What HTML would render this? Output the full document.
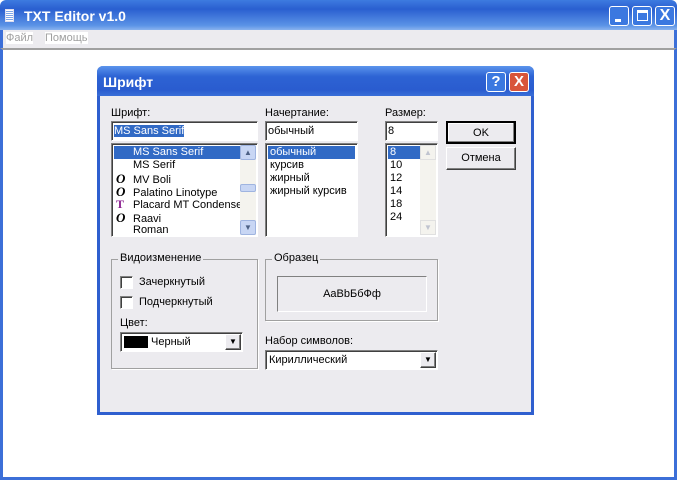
<!DOCTYPE html><html><head><meta charset="utf-8"><style>
*{margin:0;padding:0;box-sizing:border-box}
body{width:677px;height:480px;overflow:hidden;background:#fff;font-family:"Liberation Sans",sans-serif;font-size:11px;position:relative}
.a{position:absolute}
.sunk{border:1px solid;border-color:#808080 #fff #fff #808080;box-shadow:inset 1px 1px 0 #404040;background:#fff}
.btn{background:#ecebef;border:1px solid;border-color:#fff #404040 #404040 #fff;box-shadow:inset -1px -1px 0 #808080;text-align:center}
.grp{border:1px solid #a0a0a0;box-shadow:1px 1px 0 #fff}
.lbl{background:#ecebef;padding:0 2px}
.li{height:13px;line-height:13px;white-space:nowrap;padding-left:2px}
.sel{background:#316ac5;color:#fff}
.cb{width:13px;height:13px}
.xb{border:1px solid #fff;border-radius:3px}
</style></head><body>
<div class="a" style="left:0;top:0;width:677px;height:30px;background:linear-gradient(#3d7be0,#2a5fd0 30%,#5b93e6 85%,#89b3ee);border-radius:6px 6px 0 0"></div>
<div class="a" style="left:5px;top:9px;width:9px;height:13px;background:repeating-linear-gradient(#fff 0 1px,#7fa6e8 1px 2px);border:1px solid #dde"></div>
<div class="a" style="left:24px;top:8px;color:#fff;font-weight:bold;font-size:14px;font-family:'Liberation Sans Narrow','Liberation Sans',sans-serif">TXT Editor v1.0</div>
<div class="a xb" style="left:609px;top:6px;width:20px;height:20px;background:#3b78e0"><div class="a" style="left:5px;top:12px;width:6px;height:3px;background:#fff"></div></div>
<div class="a xb" style="left:632px;top:6px;width:20px;height:20px;background:#3b78e0"><div class="a" style="left:4px;top:3px;width:11px;height:11px;border:1px solid #fff;border-top-width:3px"></div></div>
<div class="a xb" style="left:655px;top:6px;width:20px;height:20px;background:#3b78e0;color:#fff;font-weight:bold;font-size:16px;text-align:center;line-height:18px">X</div>
<div class="a" style="left:0;top:30px;width:677px;height:18px;background:#ecebef;color:#a0a0a0;border-left:3px solid #3c6fd8;border-right:3px solid #3c6fd8"><span class="a" style="left:3px;top:2px;background:#fff">Файл</span><span class="a" style="left:42px;top:2px;background:#fff">Помощь</span></div>
<div class="a" style="left:0;top:48px;width:677px;height:432px;border:3px solid #3c6fd8;border-top:2px solid #a0a0a0;background:#fff"></div>
<!-- dialog -->
<div class="a" style="left:97px;top:66px;width:437px;height:349px;background:#ecebef;border:3px solid #2f5fcf;border-top:none;border-radius:6px 6px 0 0"></div>
<div class="a" style="left:97px;top:66px;width:437px;height:30px;background:linear-gradient(#5b94ec,#2d63d4 35%,#2a5ccf 80%,#3a6fd8);border-radius:6px 6px 0 0"></div>
<div class="a" style="left:103px;top:74px;color:#fff;font-weight:bold;font-size:14px">Шрифт</div>
<div class="a xb" style="left:486px;top:72px;width:20px;height:20px;background:#3b78e0;color:#fff;font-weight:bold;font-size:15px;text-align:center;line-height:18px">?</div>
<div class="a xb" style="left:509px;top:72px;width:20px;height:20px;background:#d8553a;color:#fff;font-weight:bold;font-size:15px;text-align:center;line-height:18px">X</div>
<div class="a" style="left:111px;top:107px">Шрифт:</div>
<div class="a" style="left:265px;top:107px">Начертание:</div>
<div class="a" style="left:385px;top:107px">Размер:</div>
<div class="a sunk" style="left:111px;top:121px;width:147px;height:20px;padding:3px 2px"><span class="sel">MS Sans Serif</span></div>
<div class="a sunk" style="left:265px;top:121px;width:93px;height:20px;padding:3px 2px">обычный</div>
<div class="a sunk" style="left:385px;top:121px;width:53px;height:20px;padding:3px 2px">8</div>
<div class="a sunk" style="left:111px;top:143px;width:147px;height:94px;padding:2px 0 0 2px;overflow:hidden">
<div class="li sel" style="width:126px;padding-left:19px">MS Sans Serif</div>
<div class="li" style="padding-left:19px">MS Serif</div>
<div class="li"><b style="font-family:'Liberation Serif';font-style:italic;font-size:13px;display:inline-block;width:17px">O</b>MV Boli</div>
<div class="li"><b style="font-family:'Liberation Serif';font-style:italic;font-size:13px;display:inline-block;width:17px">O</b>Palatino Linotype</div>
<div class="li"><b style="font-family:'Liberation Serif';font-size:12px;display:inline-block;width:17px;color:#8b2090">T</b>Placard MT Condense</div>
<div class="li"><b style="font-family:'Liberation Serif';font-style:italic;font-size:13px;display:inline-block;width:17px">O</b>Raavi</div>
<div class="li" style="padding-left:19px">Roman</div>
</div>
<div class="a" style="left:240px;top:145px;width:16px;height:90px;background:#f4f3ee"></div>
<div class="a" style="left:240px;top:145px;width:16px;height:15px;background:#c8d6f4;border:1px solid #9fb4e0;border-radius:2px;text-align:center;font-size:8px;line-height:13px;color:#4d6185">▲</div>
<div class="a" style="left:240px;top:184px;width:16px;height:8px;background:#c8d6f4;border:1px solid #9fb4e0;border-radius:2px"></div>
<div class="a" style="left:240px;top:220px;width:16px;height:15px;background:#c8d6f4;border:1px solid #9fb4e0;border-radius:2px;text-align:center;font-size:8px;line-height:13px;color:#4d6185">▼</div>
<div class="a sunk" style="left:265px;top:143px;width:93px;height:94px;padding:2px">
<div class="li sel">обычный</div><div class="li">курсив</div><div class="li">жирный</div><div class="li">жирный курсив</div></div>
<div class="a sunk" style="left:385px;top:143px;width:53px;height:94px;padding:2px">
<div class="li sel" style="width:32px">8</div><div class="li">10</div><div class="li">12</div><div class="li">14</div><div class="li">18</div><div class="li">24</div></div>
<div class="a" style="left:420px;top:145px;width:16px;height:90px;background:#f4f3ee"></div>
<div class="a" style="left:420px;top:145px;width:16px;height:15px;border:1px solid #e0e0e0;text-align:center;font-size:8px;line-height:13px;color:#c0c4d0">▲</div>
<div class="a" style="left:420px;top:220px;width:16px;height:15px;border:1px solid #e0e0e0;text-align:center;font-size:8px;line-height:13px;color:#c0c4d0">▼</div>
<div class="a btn" style="left:446px;top:121px;width:70px;height:23px;line-height:20px;border:2px solid #000;box-shadow:inset -1px -1px 0 #808080,inset 1px 1px 0 #fff">OK</div>
<div class="a btn" style="left:446px;top:147px;width:70px;height:23px;line-height:21px">Отмена</div>
<div class="a grp" style="left:111px;top:259px;width:147px;height:110px"></div>
<div class="a lbl" style="left:118px;top:252px">Видоизменение</div>
<div class="a sunk cb" style="left:120px;top:276px"></div><div class="a" style="left:139px;top:276px">Зачеркнутый</div>
<div class="a sunk cb" style="left:120px;top:296px"></div><div class="a" style="left:139px;top:296px">Подчеркнутый</div>
<div class="a" style="left:120px;top:317px">Цвет:</div>
<div class="a sunk" style="left:120px;top:332px;width:123px;height:20px"><div class="a" style="left:3px;top:3px;width:24px;height:12px;background:#000"></div><div class="a" style="left:30px;top:3px">Черный</div><div class="a btn" style="right:1px;top:1px;width:16px;height:16px;font-size:8px;line-height:14px">▼</div></div>
<div class="a grp" style="left:265px;top:259px;width:173px;height:62px"></div>
<div class="a lbl" style="left:272px;top:252px">Образец</div>
<div class="a" style="left:277px;top:276px;width:150px;height:36px;border:1px solid;border-color:#808080 #fff #fff #808080;text-align:center;line-height:34px">AaBbБбФф</div>
<div class="a" style="left:265px;top:335px">Набор символов:</div>
<div class="a sunk" style="left:265px;top:350px;width:173px;height:20px"><div class="a" style="left:3px;top:3px">Кириллический</div><div class="a btn" style="right:1px;top:1px;width:16px;height:16px;font-size:8px;line-height:14px">▼</div></div>
</body></html>
